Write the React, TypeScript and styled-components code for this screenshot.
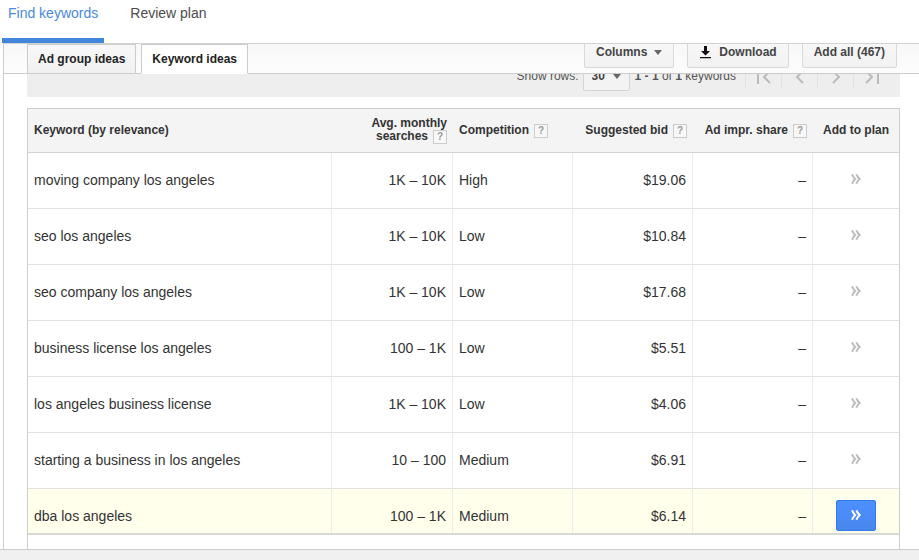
import React from "react";
import styled, { createGlobalStyle, css } from "styled-components";

const GlobalStyle = createGlobalStyle`
  *, *::before, *::after { box-sizing: border-box; }
  body {
    margin: 0;
    background: #fff;
    color: #333;
    font-family: "Liberation Sans", Arial, sans-serif;
    font-size: 14px;
  }
  button, select { font-family: inherit; margin: 0; }
`;

const Page = styled.div`
  display: flex;
  flex-direction: column;
  height: 100vh;
  overflow: hidden;
`;

const TopNav = styled.nav`
  display: flex;
  flex: none;
  gap: 20px;
  height: 43px;
  padding-left: 2px;
`;

const NavLink = styled.a<{ $active?: boolean }>`
  padding: 5px 6px 0;
  line-height: 17px;
  text-decoration: none;
  color: ${(p) => (p.$active ? "#4a8ae0" : "#4c4c4c")};
  border-bottom: 5px solid ${(p) => (p.$active ? "#4285dd" : "transparent")};
`;

const Frame = styled.main`
  display: flex;
  flex: 1;
  flex-direction: column;
  min-height: 0;
  margin-left: 3px;
  border-top: 1px solid #d2d2d2;
  border-left: 1px solid #ccc;
`;

const Toolbar = styled.div`
  display: flex;
  flex: none;
  align-items: flex-end;
  justify-content: space-between;
  height: 30px;
  padding: 0 22px 0 23px;
  overflow: hidden;
  background: linear-gradient(#f8f8f8, #fdfdfd);
  box-shadow: inset 0 -1px #ccc;
`;

const Tabs = styled.div`
  display: flex;
  gap: 5px;
`;

const Tab = styled.button<{ $active?: boolean }>`
  height: 30px;
  padding: 0 10px;
  border: 1px solid #ccc;
  border-bottom-color: ${(p) => (p.$active ? "#fff" : "#ccc")};
  background: ${(p) => (p.$active ? "#fff" : "linear-gradient(#f8f8f8, #f1f1f1)")};
  color: #222;
  font-size: 12px;
  font-weight: bold;
`;

const Actions = styled.div`
  display: flex;
  gap: 13px;
  padding-bottom: 6px;
`;

const ActionButton = styled.button`
  display: flex;
  align-items: center;
  gap: 7px;
  height: 32px;
  padding: 0 11px;
  border: 1px solid #d9d9d9;
  border-radius: 2px;
  background: linear-gradient(#f8f8f8, #f2f2f2);
  color: #444;
  font-size: 12px;
  font-weight: bold;
  white-space: nowrap;
`;

const Pager = styled.div`
  display: flex;
  flex: none;
  align-items: flex-end;
  justify-content: flex-end;
  height: 23px;
  margin: 0 19px 11px 23px;
  padding: 0 11px 6px 0;
  overflow: hidden;
  background: #eee;
  color: #555;
  font-size: 12px;
`;

const PagerLabel = styled.label`
  display: flex;
  align-items: center;
  gap: 4px;
  height: 30px;
`;

const SelectBox = styled.span`
  display: grid;
  align-items: center;
  width: 47px;
  & > * { grid-area: 1 / 1; }
  & > svg {
    justify-self: end;
    margin-right: 9px;
    pointer-events: none;
  }
`;

const RowSelect = styled.select`
  appearance: none;
  width: 100%;
  height: 30px;
  padding: 0 8px;
  border: 1px solid #d4d4d4;
  border-radius: 2px;
  background: #f3f3f3;
  color: #444;
  font-size: 12px;
  font-weight: bold;
`;

const PagerStatus = styled.span`
  height: 30px;
  margin: 0 9px 0 5px;
  line-height: 30px;
`;

const PageButton = styled.button`
  display: flex;
  align-items: flex-end;
  justify-content: center;
  width: 36px;
  height: 30px;
  margin-bottom: 3px;
  padding: 0 0 4px;
  border: 0;
  border-left: 1px solid #e2e2e2;
  background: none;
  color: #bbb;
`;

const Grid = styled.section`
  display: flex;
  flex: 1;
  flex-direction: column;
  min-height: 0;
  margin: 0 19px 0 23px;
  padding-bottom: 14px;
  border: 1px solid #ccc;
  border-bottom: 0;
`;

const Scroller = styled.div`
  flex: 1;
  min-height: 0;
  overflow: auto;
  scrollbar-width: none;
  border-bottom: 2px solid #d9d9d4;
`;

const Table = styled.table`
  width: 100%;
  border-collapse: separate;
  border-spacing: 0;
  table-layout: fixed;
`;

type Align = "left" | "right" | "center";

const Col = styled.col<{ $width?: number }>`
  width: ${(p) => (p.$width ? `${p.$width}px` : "auto")};
`;

const HeadCell = styled.th<{ $align: Align }>`
  height: 44px;
  padding: 0 6px;
  border-bottom: 1px solid #d4d4d4;
  background: #f4f4f4;
  color: #333;
  font-size: 12px;
  line-height: 13px;
  text-align: ${(p) => p.$align};
`;

const Help = styled.button`
  width: 14px;
  height: 14px;
  margin-left: 5px;
  padding: 0;
  border: 1px solid #ccc;
  background: #f8f8f8;
  color: #999;
  font-size: 10px;
  font-weight: bold;
  line-height: 12px;
  vertical-align: middle;
`;

const Row = styled.tr<{ $active?: boolean }>`
  background: ${(p) => (p.$active ? "#ffffec" : "#fff")};
`;

const Cell = styled.td<{ $align?: Align }>`
  height: 56px;
  padding: 0 6px 2px;
  border-right: 1px solid #ececec;
  border-bottom: 1px solid #e2e2e2;
  text-align: ${(p) => p.$align ?? "left"};
  white-space: nowrap;
  &:last-child { border-right: 0; }
`;

const AddButton = styled.button<{ $active?: boolean }>`
  display: inline-flex;
  align-items: center;
  justify-content: center;
  width: 40px;
  height: 31px;
  padding: 0 0 2px;
  border: 1px solid transparent;
  border-radius: 2px;
  background: none;
  color: #bdbdbd;
  vertical-align: middle;
  ${(p) =>
    p.$active &&
    css`
      border-color: #3079ed;
      background: linear-gradient(#4d90fe, #4787ed);
      color: #fff;
    `}
`;

const Footer = styled.footer`
  flex: none;
  height: 11px;
  border-top: 1px solid #ccc;
  background: #f0f0f0;
`;

const Caret = () => (
  <svg width="8" height="5" viewBox="0 0 8 5" aria-hidden="true">
    <path d="M0 0h8L4 5z" fill="#666" />
  </svg>
);

const DownloadIcon = () => (
  <svg width="13" height="14" viewBox="0 0 13 14" aria-hidden="true">
    <path d="M5 1h3v5h3L6.500 10.500 2 6h3zM1 12h11v1.300H1z" fill="#111" />
  </svg>
);

const DoubleChevron = () => (
  <svg width="10" height="10" viewBox="0 0 10 10" fill="none" stroke="currentColor" strokeWidth="2" aria-hidden="true">
    <path d="M1 .3Q2.500 3.500 4.200 5 2.500 6.500 1 9.700M5.300 .3Q6.800 3.500 8.700 5 6.800 6.500 5.300 9.700" />
  </svg>
);

const pageIcons = [
  { label: "First page", d: "M2 0v14M14 1L8 7l6 6" },
  { label: "Previous page", d: "M11 1L5 7l6 6" },
  { label: "Next page", d: "M5 1l6 6-6 6" },
  { label: "Last page", d: "M2 1l6 6-6 6M14 0v14" },
];

const columns: { title: React.ReactNode; name: string; align: Align; width?: number; help?: boolean }[] = [
  { title: "Keyword (by relevance)", name: "Keyword", align: "left" },
  { title: <>Avg. monthly<br />searches</>, name: "Average monthly searches", align: "right", width: 121, help: true },
  { title: "Competition", name: "Competition", align: "left", width: 120, help: true },
  { title: "Suggested bid", name: "Suggested bid", align: "right", width: 120, help: true },
  { title: "Ad impr. share", name: "Ad impression share", align: "right", width: 120, help: true },
  { title: "Add to plan", name: "Add to plan", align: "center", width: 86 },
];

const rows = [
  ["moving company los angeles", "1K – 10K", "High", "$19.06"],
  ["seo los angeles", "1K – 10K", "Low", "$10.84"],
  ["seo company los angeles", "1K – 10K", "Low", "$17.68"],
  ["business license los angeles", "100 – 1K", "Low", "$5.51"],
  ["los angeles business license", "1K – 10K", "Low", "$4.06"],
  ["starting a business in los angeles", "10 – 100", "Medium", "$6.91"],
  ["dba los angeles", "100 – 1K", "Medium", "$6.14"],
];

export default function App() {
  return (
    <Page>
      <GlobalStyle />
      <TopNav>
        <NavLink href="#find" $active>Find keywords</NavLink>
        <NavLink href="#review">Review plan</NavLink>
      </TopNav>
      <Frame>
        <Toolbar>
          <Tabs role="tablist">
            <Tab role="tab" aria-selected={false}>Ad group ideas</Tab>
            <Tab role="tab" aria-selected $active>Keyword ideas</Tab>
          </Tabs>
          <Actions>
            <ActionButton>Columns <Caret /></ActionButton>
            <ActionButton><DownloadIcon /> Download</ActionButton>
            <ActionButton>Add all (467)</ActionButton>
          </Actions>
        </Toolbar>
        <Pager>
          <PagerLabel>
            Show rows:
            <SelectBox>
              <RowSelect defaultValue="30">
                <option>30</option>
                <option>50</option>
                <option>100</option>
              </RowSelect>
              <Caret />
            </SelectBox>
          </PagerLabel>
          <PagerStatus><b>1 - 1</b> of <b>1</b> keywords</PagerStatus>
          {pageIcons.map((icon) => (
            <PageButton key={icon.label} aria-label={icon.label}>
              <svg width="16" height="14" viewBox="0 0 16 14" fill="none" stroke="currentColor" strokeWidth="2" aria-hidden="true">
                <path d={icon.d} />
              </svg>
            </PageButton>
          ))}
        </Pager>
        <Grid>
          <Scroller>
            <Table>
              <colgroup>
                {columns.map((c) => <Col key={c.name} $width={c.width} />)}
              </colgroup>
              <thead>
                <tr>
                  {columns.map((c) => (
                    <HeadCell key={c.name} scope="col" $align={c.align}>
                      {c.title}
                      {c.help && <Help aria-label={`Help: ${c.name}`}>?</Help>}
                    </HeadCell>
                  ))}
                </tr>
              </thead>
              <tbody>
                {rows.map(([keyword, searches, competition, bid], i) => {
                  const active = i === rows.length - 1;
                  return (
                    <Row key={keyword} $active={active}>
                      <Cell>{keyword}</Cell>
                      <Cell $align="right">{searches}</Cell>
                      <Cell>{competition}</Cell>
                      <Cell $align="right">{bid}</Cell>
                      <Cell $align="right">–</Cell>
                      <Cell $align="center">
                        <AddButton $active={active} aria-label={`Add ${keyword} to plan`}>
                          <DoubleChevron />
                        </AddButton>
                      </Cell>
                    </Row>
                  );
                })}
              </tbody>
            </Table>
          </Scroller>
        </Grid>
      </Frame>
      <Footer />
    </Page>
  );
}
